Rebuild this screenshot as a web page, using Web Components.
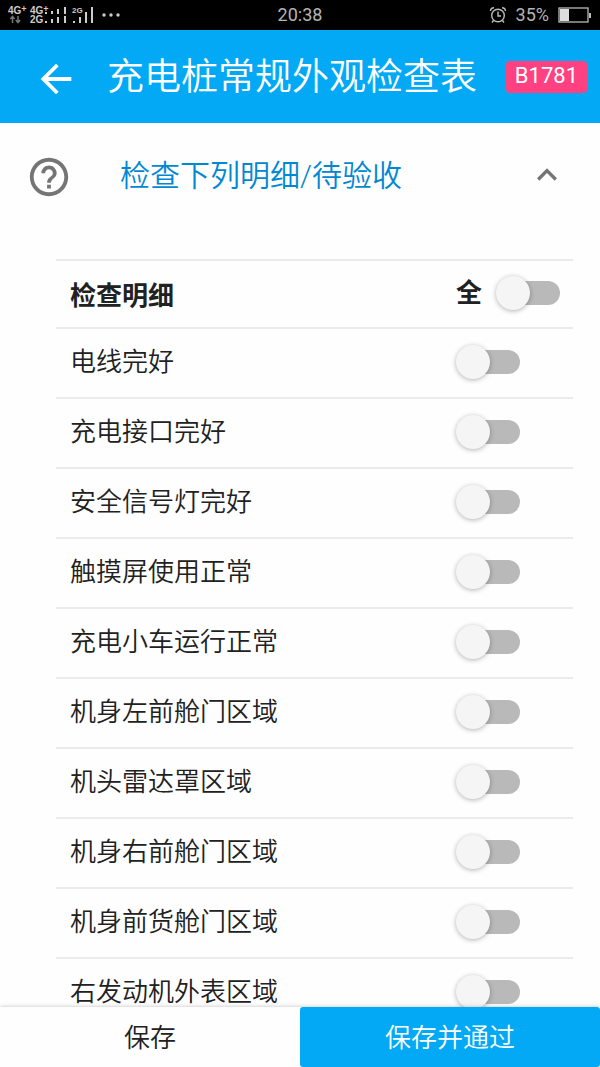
<!DOCTYPE html>
<html lang="zh-CN">
<head>
<meta charset="utf-8">
<meta name="viewport" content="width=device-width, initial-scale=1">
<title>充电桩常规外观检查表</title>
<style>
  html, body { height: 100%; }
  body { margin: 0; background: #fefefe; color: #212121; font-family: Roboto, "Noto Sans CJK SC", sans-serif; font-weight: 350; }
</style>
</head>
<body>
<inspection-page></inspection-page>

<template id="status-bar">
  <style>
    :host { display: grid; grid-template-columns: 1fr auto 1fr; align-items: center; height: 30px; padding: 0 8px; background: #000; color: #b4b4b4; font: 400 18px/30px Roboto, sans-serif; }
    .side { display: flex; align-items: center; height: 30px; }
    .end { justify-content: flex-end; gap: 9px; }
    .net { display: flex; flex-direction: column; font: 700 10px/9px "Liberation Sans", sans-serif; color: #ccc; }
    sup { font-size: 9px; line-height: 0; vertical-align: 2px; }
    .first { width: 22px; }
    .second { width: 15px; }
    svg { display: block; }
    .arrows { margin-left: 1px; }
    .dots { margin-left: 8px; }
  </style>
  <div class="side">
    <div class="net first"><span>4G<sup>+</sup></span>
      <svg class="arrows" width="14" height="9" viewBox="0 0 14 9" fill="none" stroke="#777" stroke-width="1.500"><path d="M3.500 8V1.500M1.300 4 3.500 1.500 5.700 4M9 1v6.500M6.800 5 9 7.500 11.200 5"/></svg>
    </div>
    <div class="net second"><span>4G<sup>+</sup></span><span>2G</span></div>
    <svg width="27" height="20" viewBox="0 0 27 20" fill="#ccc"><path d="M0 7h2v2H0zM6 6h2v3H6zM12 4h2v5h-2zM19 2h2v7h-2zM0 16h2v2H0zM6 14h2v4H6zM12 12h2v6h-2zM19 11h2v7h-2z"/></svg>
    <svg width="22" height="20" viewBox="0 0 22 20" fill="#ccc"><text x="0" y="8" font-family="Liberation Sans, sans-serif" font-size="8" font-weight="700">2G</text><path d="M1 16h2v2H1zM7 12h2v6H7zM13 7h2v11h-2zM19 2h2v16h-2z"/></svg>
    <svg class="dots" width="18" height="6" viewBox="0 0 18 6" fill="#ccc"><circle cx="2" cy="3" r="1.700"/><circle cx="9" cy="3" r="1.700"/><circle cx="16" cy="3" r="1.700"/></svg>
  </div>
  <time>20:38</time>
  <div class="side end">
    <svg width="18" height="18" viewBox="0 0 18 18" fill="none" stroke="#bbb" stroke-width="1.400"><circle cx="9" cy="9.500" r="6.300"/><path d="M9 5.500V10h3M1.500 5C1.600 3 3 1.700 5 1.700M16.500 5C16.400 3 15 1.700 13 1.700M4.500 14.500 3 16.500M13.500 14.500 15 16.500"/></svg>
    <span>35%</span>
    <svg width="34" height="16" viewBox="0 0 34 16"><rect x="1" y="1" width="29" height="14" fill="none" stroke="#bbb" stroke-width="1.300"/><path fill="#ddd" d="M2 2h9v12H2z"/><path fill="#bbb" d="M31 6h2v5h-2z"/></svg>
  </div>
</template>

<template id="app-bar">
  <style>
    :host { display: flex; align-items: center; height: 93px; padding: 0 13px 0 33px; background: #03a9f4; color: #fff; }
    button { display: flex; padding: 0; border: 0; background: none; color: inherit; }
    svg { display: block; margin-top: 5px; }
    h1 { flex: 1; margin: 2px 0 0 28px; font-size: 37px; line-height: 48px; font-weight: 350; white-space: nowrap; }
    .badge { padding: 1px 9px 3px; border-radius: 4px; background: #ff4081; font-size: 22px; line-height: 28px; font-weight: 400; }
  </style>
  <button type="button" aria-label="返回"><svg width="46" height="46" viewBox="0 0 24 24" fill="currentColor"><path d="M20 11H7.830l5.590-5.590L12 4l-8 8 8 8 1.410-1.410L7.830 13H20v-2z"/></svg></button>
  <h1><slot></slot></h1>
  <span class="badge"><slot name="badge"></slot></span>
</template>

<template id="section-header">
  <style>
    :host { display: flex; align-items: center; height: 108px; padding: 0 33px 0 26px; color: #757575; }
    svg { display: block; }
    h2 { flex: 1; margin: 0 0 2px 48px; color: #0288d1; font-size: 30px; line-height: 40px; font-weight: 350; white-space: nowrap; }
    button { display: flex; margin-bottom: 4px; padding: 0; border: 0; background: none; color: inherit; }
  </style>
  <svg width="46" height="46" viewBox="0 0 24 24" fill="currentColor"><path d="M11 18h2v-2h-2v2zm1-16C6.480 2 2 6.480 2 12s4.480 10 10 10 10-4.480 10-10S17.520 2 12 2zm0 18c-4.410 0-8-3.590-8-8s3.590-8 8-8 8 3.590 8 8-3.590 8-8 8zm0-14c-2.210 0-4 1.790-4 4h2c0-1.100.9-2 2-2s2 .9 2 2c0 2-3 1.750-3 5h2c0-2.250 3-2.500 3-5 0-2.210-1.790-4-4-4z"/></svg>
  <h2><slot></slot></h2>
  <button type="button" aria-label="收起" aria-expanded="true"><svg width="40" height="40" viewBox="0 0 24 24" fill="currentColor"><path d="M12 8l-6 6 1.410 1.410L12 10.830l4.590 4.580L18 14z"/></svg></button>
</template>

<template id="check-table">
  <style>
    :host { display: block; padding: 28px 27px 0 56px; }
    table { width: 100%; border-collapse: separate; border-spacing: 0; font-size: 26px; line-height: 36px; }
    th, td { box-sizing: border-box; height: 70px; padding: 0 0 2px 14px; border-top: 2px solid #ebebeb; text-align: left; font-weight: 350; white-space: nowrap; }
    thead th { height: 68px; padding-top: 4px; padding-bottom: 0; font-weight: 700; }
    th + th, td { width: 117px; padding: 0 0 2px; }
    .switch { display: flex; align-items: center; gap: 14px; }
    input { appearance: none; display: block; position: relative; width: 64px; height: 34px; margin: 0; }
    input::before { content: ""; position: absolute; inset: 5px 0 5px 6px; border-radius: 12px; background: #b9b9b9; }
    input::after { content: ""; position: absolute; left: 0; top: 0; width: 34px; height: 34px; border-radius: 50%; background: #f5f5f5; box-shadow: 0 1px 5px rgba(0, 0, 0, .3); }
    input:checked::before { background: #81d4fa; }
    input:checked::after { left: 30px; background: #03a9f4; }
  </style>
  <table>
    <thead><tr><th scope="col">检查明细</th><th scope="col"><span class="switch"><label for="all">全</label><input id="all" type="checkbox" role="switch"></span></th></tr></thead>
    <tbody></tbody>
  </table>
</template>

<template id="action-bar">
  <style>
    :host { display: flex; height: 60px; background: #fefefe; box-shadow: 0 0 4px rgba(0, 0, 0, .25); position: relative; }
    button { flex: 1; padding: 2px 0 0; border: 0; border-radius: 3px; background: #fefefe; color: #212121; font: inherit; font-size: 26px; line-height: 36px; }
    .primary { background: #03a9f4; color: #fff; }
  </style>
  <button type="button">保存</button>
  <button type="button" class="primary">保存并通过</button>
</template>

<template id="inspection-page">
  <style>
    :host { display: flex; flex-direction: column; height: 100vh; }
    main { flex: 1; min-height: 0; overflow: auto; scrollbar-width: none; }
    status-bar, app-bar, action-bar { flex: none; }
  </style>
  <status-bar></status-bar>
  <app-bar>充电桩常规外观检查表<span slot="badge">B1781</span></app-bar>
  <main>
    <section-header>检查下列明细/待验收</section-header>
    <check-table></check-table>
  </main>
  <action-bar></action-bar>
</template>

<script>
  class TemplateElement extends HTMLElement {
    constructor() {
      super();
      const template = document.getElementById(this.localName);
      this.attachShadow({ mode: 'open' }).append(template.content.cloneNode(true));
    }
  }

  const CHECKS = ['电线完好', '充电接口完好', '安全信号灯完好', '触摸屏使用正常', '充电小车运行正常',
    '机身左前舱门区域', '机头雷达罩区域', '机身右前舱门区域', '机身前货舱门区域', '右发动机外表区域'];

  class CheckTable extends TemplateElement {
    connectedCallback() {
      const root = this.shadowRoot;
      root.querySelector('tbody').innerHTML = CHECKS.map((name, i) =>
        `<tr><th scope="row"><label for="c${i}">${name}</label></th><td><span class="switch"><input id="c${i}" type="checkbox" role="switch"></span></td></tr>`).join('');
      const all = root.getElementById('all');
      const items = [...root.querySelectorAll('tbody input')];
      root.addEventListener('change', ({ target }) => {
        if (target === all) items.forEach(item => { item.checked = all.checked; });
        else all.checked = items.every(item => item.checked);
      });
    }
  }

  customElements.define('status-bar', class extends TemplateElement {});
  customElements.define('app-bar', class extends TemplateElement {});
  customElements.define('section-header', class extends TemplateElement {});
  customElements.define('check-table', CheckTable);
  customElements.define('action-bar', class extends TemplateElement {});
  customElements.define('inspection-page', class extends TemplateElement {});
</script>
</body>
</html>
